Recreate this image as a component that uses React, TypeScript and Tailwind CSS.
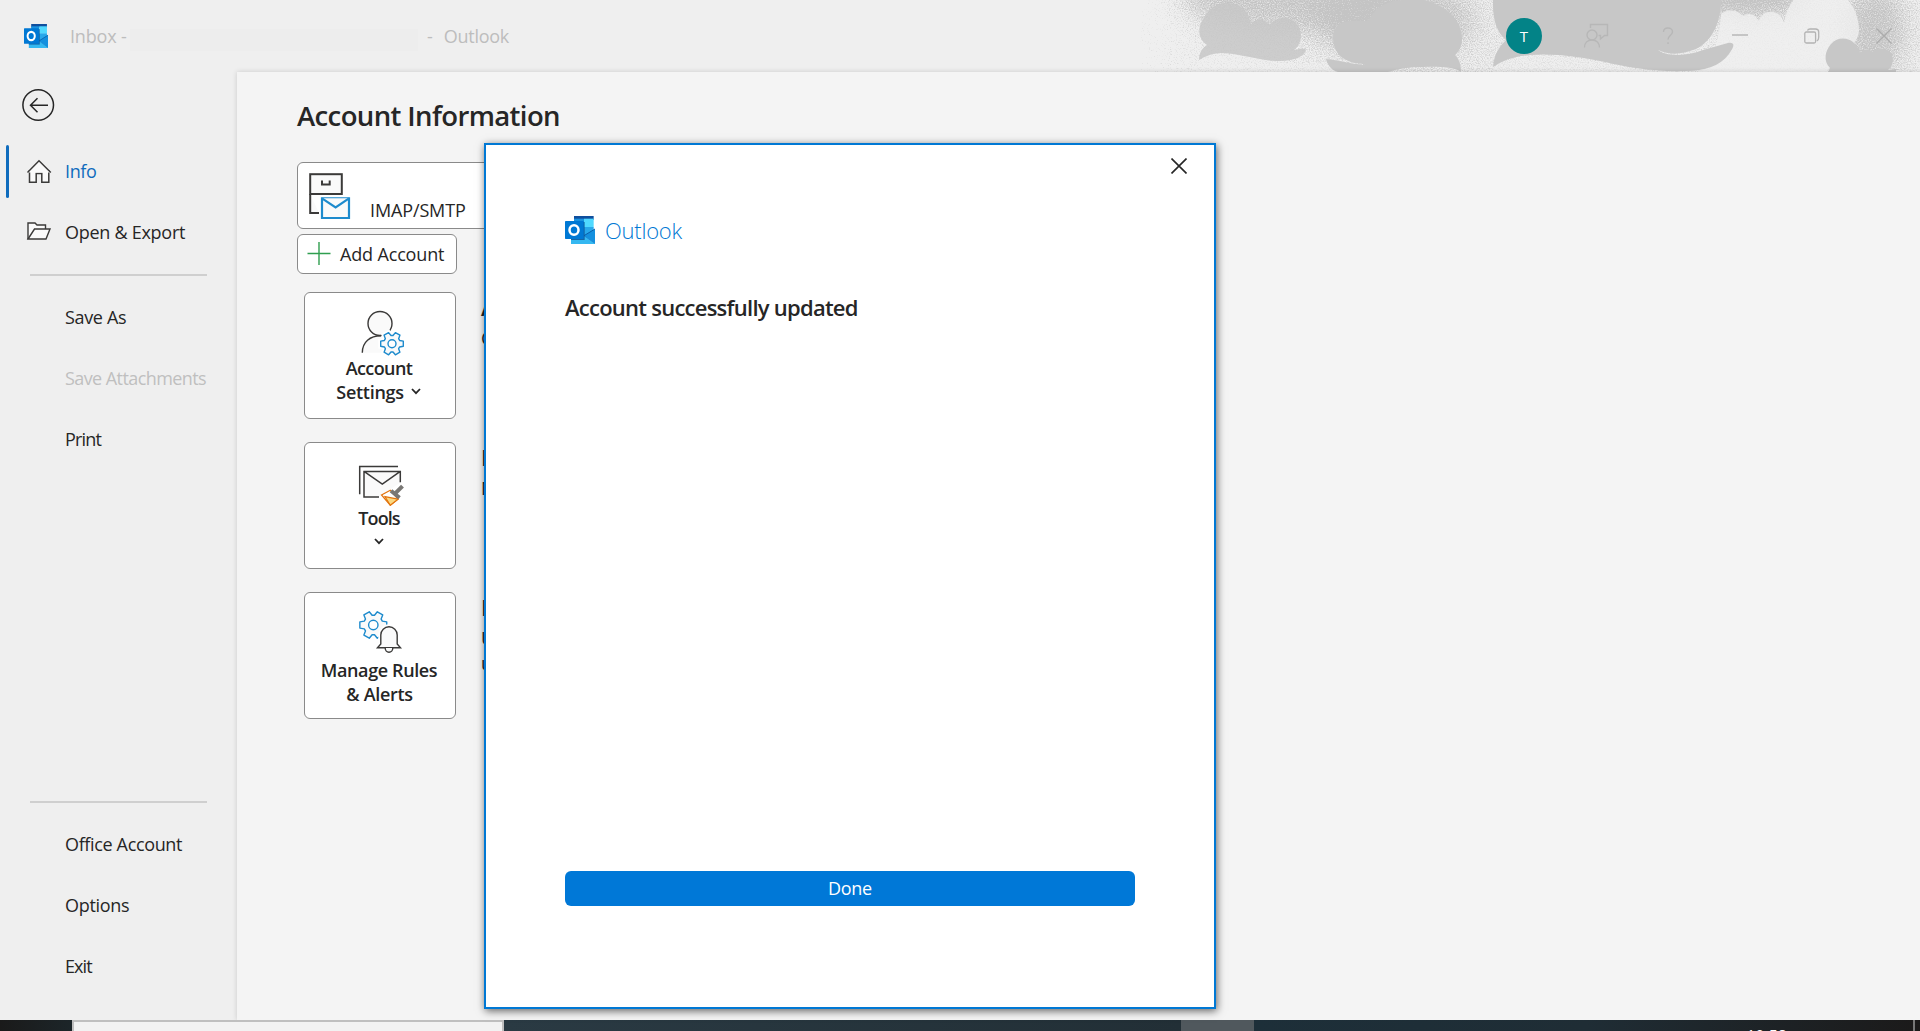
import type { ReactNode } from 'react'

function gearPath(cx: number, cy: number, outer: number, inner: number) {
  const points: string[] = []
  for (let i = 0; i < 6; i++) {
    const steps: [number, number][] = [[-23, inner], [-13, outer], [13, outer], [23, inner]]
    for (const [offset, r] of steps) {
      const a = ((i * 60 + offset) * Math.PI) / 180
      points.push(`${(cx + r * Math.cos(a)).toFixed(2)} ${(cy + r * Math.sin(a)).toFixed(2)}`)
    }
  }
  return `M${points.join('L')}Z`
}

function OutlookLogo({ className }: { className: string }) {
  return (
    <svg viewBox="0 0 90 84" preserveAspectRatio="none" className={className}>
      <rect x="27" y="0" width="59" height="12" fill="#0f4f9e" />
      <rect x="27" y="8" width="30" height="26" fill="#1a93e0" />
      <rect x="57" y="8" width="29" height="26" fill="#50d9ff" />
      <rect x="27" y="33" width="59" height="30" fill="#28a8ea" />
      <path d="M18 58H58L90 80V84H18Z" fill="#35b8f1" />
      <path d="M57 59L90 39V82Z" fill="#1490df" />
      <path d="M57 59L90 39" stroke="#0a5ea8" strokeWidth="3" />
      <path d="M57 59L90 82" stroke="#1a7fcb" strokeWidth="2" />
      <rect x="18" y="18" width="41" height="54" fill="#0a4b8c" opacity="0.75" />
      <rect x="0" y="15" width="56" height="54" rx="2" fill="#0078d4" />
      <ellipse cx="27" cy="42" rx="13.5" ry="14.5" fill="none" stroke="#fff" strokeWidth="7.5" />
    </svg>
  )
}

function TitleArt() {
  return (
    <svg width="780" height="72" viewBox="0 0 780 72" className="absolute right-0 top-0">
      <defs>
        <filter id="stipple" x="0" y="0" width="100%" height="100%" colorInterpolationFilters="sRGB">
          <feTurbulence type="fractalNoise" baseFrequency="0.85" numOctaves="2" seed="7" result="noise" />
          <feColorMatrix in="noise" type="matrix" values="0 0 0 0 0  0 0 0 0 0  0 0 0 0 0  1 0 0 0 0" result="grain" />
          <feComposite in="SourceGraphic" in2="grain" operator="arithmetic" k1="0" k2="1" k3="1" k4="-0.5" result="sum" />
          <feColorMatrix in="sum" type="matrix" values="0 0 0 0 0.77  0 0 0 0 0.77  0 0 0 0 0.77  0 0 0 1.9 -0.3" />
        </filter>
        <filter id="soft" x="-50%" y="-50%" width="200%" height="200%">
          <feGaussianBlur stdDeviation="14" />
        </filter>
        <linearGradient id="fade" x1="0" x2="1" y1="0" y2="0">
          <stop offset="0" stopOpacity="0" />
          <stop offset="0.08" stopOpacity="0.15" />
          <stop offset="0.3" stopOpacity="0.26" />
          <stop offset="1" stopOpacity="0.2" />
        </linearGradient>
      </defs>
      <g filter="url(#stipple)">
        <rect width="780" height="72" fill="url(#fade)" />
        <g filter="url(#soft)">
          <ellipse cx="150" cy="-4" rx="115" ry="36" fillOpacity="0.5" />
          <ellipse cx="255" cy="20" rx="80" ry="38" fillOpacity="0.5" />
          <ellipse cx="610" cy="-6" rx="60" ry="22" fillOpacity="0.7" />
          <ellipse cx="734" cy="30" rx="32" ry="46" fillOpacity="0.55" />
        </g>
      </g>
      {/* pale cloud behind the window buttons */}
      <g fill="#efefef" fillOpacity="0.82">
        <path d="M581 14C588 8 598 10 603 16C609 12 615 14 619 21C622 9 640 8 644 23C648 -2 665 -14 681 -14C702 -14 719 8 719 30C719 38 714 44 708 50L686 72H560C572 60 580 40 581 14Z" />
        <path d="M59 61C75 51 95 55 115 58C150 66 200 62 186 63L196 72H50Z" fillOpacity="0.4" />
        <path d="M353 67C380 52 410 52 465 63C490 68 505 70 520 72H353Z" fillOpacity="0.4" />
      </g>
      <g fill="#c7c7c7">
        <path
          opacity="0.85"
          d="M59 60C59 53 62 48 67 45C57 38 58 27 63 19C70 6 80 2 90 3C101 4 109 12 111 24C116 17 125 18 129 25C137 16 150 16 157 24C164 33 161 45 154 50C160 49 165 48 166 50C164 57 153 61 140 61C118 61 100 53 80 53C70 54 64 57 59 60Z"
        />
        <path d="M186 59C192 59 205 63 225 65C222 63 218 64 215 63C200 60 193 50 193 38C193 27 200 21 211 21H228C234 10 242 2 262 0H284C306 5 322 21 322 38C322 46 319 52 315 55C320 60 321 66 321 72C312 65 290 67 275 67C262 68 255 70 248 72H198C190 70 187 63 186 59Z" />
        <path d="M353 0H581C581 20 574 40 556 49C540 55 530 55 518 50C525 56 545 57 563 50L588 43C596 42 594 47 589 54C580 66 565 71 545 71C515 72 485 67 465 62C440 57 415 53 390 55C375 56 362 61 353 67C354 52 362 44 366 40C356 32 353 18 353 5Z" />
        <path d="M688 72L690 68C683 61 685 51 691 44C700 34 716 38 720 53C724 48 729 49 732 52C738 47 748 48 751 53C755 60 752 67 748 70L756 69V72Z" />
      </g>
    </svg>
  )
}

function TitleBar() {
  return (
    <header className="relative flex h-[72px] shrink-0 items-center bg-[#efefef] text-[18px] text-[#bdbdbd]">
      <TitleArt />
      <OutlookLogo className="ml-6 h-6 w-6" />
      <span className="ml-[22px] w-[60px] whitespace-nowrap tracking-[-0.17px]">Inbox -</span>
      <span className="mt-2 h-[22px] w-[288px] bg-[#ededed]" />
      <span className="ml-[9px]">-</span>
      <span className="ml-[11px] tracking-[-0.28px]">Outlook</span>
      <div className="relative ml-auto mr-[28px] flex items-center">
        <span className="flex h-9 w-9 items-center justify-center rounded-full bg-[#038387] text-[15px] text-white">T</span>
        <svg width="26" height="26" viewBox="0 0 26 26" fill="none" stroke="#b7b7b7" strokeWidth="1.4" className="ml-[41px]">
          <circle cx="9" cy="12" r="5" />
          <path d="M1.5 24.5C1.5 20 4.5 17 9 17S16.5 20 16.5 24.5M7.5 5V1.5H24.5V12.5H21.5L17.5 16V12.5H15.5" />
        </svg>
        <svg width="12" height="18" viewBox="0 0 12 18" fill="none" stroke="#b7b7b7" strokeWidth="1.4" className="ml-[53px]">
          <path d="M1.5 5C1.5 2.5 3.5 1 6 1S10.5 2.5 10.5 5C10.5 8 6 8.5 6 12.5M6 15.2V17" />
        </svg>
        <svg width="16" height="16" viewBox="0 0 16 16" stroke="#b3b3b3" strokeWidth="1.4" className="ml-[58px]">
          <path d="M0 7H16" />
        </svg>
        <svg width="16" height="16" viewBox="0 0 16 16" fill="none" stroke="#b3b3b3" strokeWidth="1.3" className="ml-[56px]">
          <rect x="0.8" y="4" width="10.8" height="11" rx="1.5" />
          <path d="M3.5 2.5C4 1.3 5 1 6 1H11.5C13.5 1 14.7 2.2 14.7 4V9.5C14.7 11.5 14 12.5 12.8 13" />
        </svg>
        <svg width="16" height="16" viewBox="0 0 16 16" stroke="#acacac" strokeWidth="1.3" className="ml-[56px]">
          <path d="M0.5 0.5L15.5 15.5M15.5 0.5L0.5 15.5" />
        </svg>
      </div>
    </header>
  )
}

function NavItem({ children, icon, className = '' }: { children: ReactNode; icon?: ReactNode; className?: string }) {
  return (
    <div className={`flex h-[61px] shrink-0 items-center whitespace-nowrap ${className}`}>
      <span className="flex w-[65px] pl-[26px]">{icon}</span>
      {children}
    </div>
  )
}

function Sidebar() {
  return (
    <nav className="flex w-[237px] shrink-0 flex-col bg-[#efefef] text-[18px] text-[#262626]">
      <svg width="34" height="34" viewBox="0 0 34 34" fill="none" stroke="#262626" strokeWidth="1.5" className="ml-[21px] mt-4 shrink-0">
        <circle cx="17.2" cy="17" r="15.3" />
        <path d="M27 17.3H9.8M16.5 10.3L9.5 17.3L16.5 24.3" />
      </svg>
      <div className="mt-[19px] flex items-center">
        <span className="ml-[6px] h-[53px] w-[3px] rounded-full bg-[#0f6cbd]" />
        <NavItem
          className="-ml-[9px] tracking-[-0.37px] text-[#0f6cbd]"
          icon={
            <svg width="26" height="26" viewBox="0 0 26 26" fill="#fafafa" stroke="#3b3a39" strokeWidth="1.5">
              <path d="M3.5 11V23.3H10.2V14.5H15.8V23.3H22.8V11" />
              <path d="M1.5 13.5L13 1.8L24.8 13.5" />
            </svg>
          }
        >
          Info
        </NavItem>
      </div>
      <NavItem
        className="tracking-[-0.27px]"
        icon={
          <svg width="26" height="20" viewBox="0 0 26 20" fill="#fafafa" stroke="#3b3a39" strokeWidth="1.4" className="-mt-[4px]">
            <path d="M2 18V2H9L11 4H19.5V8" />
            <path d="M2 18L8.5 8H24L20 18Z" />
          </svg>
        }
      >
        Open &amp; Export
      </NavItem>
      <hr className="ml-[30px] mt-[11px] w-[177px] border-t-2 border-[#cfcfcf]" />
      <NavItem className="mt-[11px] tracking-[-0.34px]">Save As</NavItem>
      <NavItem className="tracking-[-0.58px] text-[#bfbfbf]">Save Attachments</NavItem>
      <NavItem className="tracking-[-0.8px]">Print</NavItem>
      <div className="mt-auto flex flex-col pb-[23px]">
        <hr className="mb-[11px] ml-[30px] w-[177px] border-t-2 border-[#cfcfcf]" />
        <NavItem className="tracking-[-0.35px]">Office Account</NavItem>
        <NavItem className="tracking-[-0.31px]">Options</NavItem>
        <NavItem className="tracking-[-0.9px]">Exit</NavItem>
      </div>
    </nav>
  )
}

function Chevron({ className = '' }: { className?: string }) {
  return (
    <svg width="10" height="7" viewBox="0 0 10 7" fill="none" stroke="#262626" strokeWidth="1.8" className={className}>
      <path d="M1 1L5 5.2L9 1" />
    </svg>
  )
}

function Card({ icon, children }: { icon: ReactNode; children: ReactNode }) {
  return (
    <div className="flex h-[127px] w-[152px] shrink-0 flex-col items-center rounded-md border border-[#8a8a8a] bg-white pt-[17px] text-[18px] font-semibold leading-6 text-[#262626]">
      {icon}
      {children}
    </div>
  )
}

function AccountIcon() {
  return (
    <svg width="48" height="46" viewBox="0 0 48 46" fill="#fafafa" strokeWidth="1.4" className="shrink-0">
      <path d="M6.3 42.7C6.3 32 14 25.7 26.7 25.7L27 42.7" stroke="none" />
      <circle cx="24" cy="13.5" r="12" stroke="#3b3a39" />
      <path d="M6.3 42.7C6.3 32 14 25.7 25 25.7" fill="none" stroke="#3b3a39" />
      <path d={gearPath(36, 33.7, 11.6, 8.3)} fill="#fff" stroke="#fff" strokeWidth="5" />
      <path d={gearPath(36, 33.7, 11.6, 8.3)} stroke="#1e8bcd" strokeLinejoin="round" />
      <circle cx="36" cy="33.7" r="4" fill="#fff" stroke="#1e8bcd" />
    </svg>
  )
}

function ToolsIcon() {
  return (
    <svg width="48" height="46" viewBox="0 -0.7 48 46" fill="none" stroke="#3b3a39" strokeWidth="1.5" className="shrink-0">
      <path d="M3.7 33.5V5.7H42" />
      <path d="M44.3 22V10.7H8V36H23L44 22" fill="#fafafa" stroke="none" />
      <path d="M44.3 21.5V10.7H8V36.2H23M8 10.7L26.3 23.3L44.3 10.7" />
      <path d="M25.5 34.3L34.3 29.5L42 38.5L34.3 44.5Z" fill="#fff" stroke="#e3730b" strokeWidth="1.3" />
      <path d="M29 36L42 38.5L34.3 44.5Z" fill="#fbd982" stroke="#e3730b" strokeWidth="1.2" />
      <path d="M35 30L43.5 37M39.5 32.5L46.5 25.5" stroke="#797774" strokeWidth="4" />
    </svg>
  )
}

function RulesIcon() {
  return (
    <svg width="48" height="46" viewBox="0 0 48 46" fill="#fafafa" strokeWidth="1.4" className="shrink-0">
      <path d={gearPath(17.3, 15, 13.8, 9.8)} stroke="#1e8bcd" strokeLinejoin="round" />
      <circle cx="17.3" cy="15" r="4.7" fill="#fff" stroke="#1e8bcd" />
      <path d="M21.5 37.7L24.8 34V25A8.2 8.2 0 0 1 41.2 25V34L44.5 37.7Z" stroke="#fff" strokeWidth="5" />
      <path d="M21.5 37.7L24.8 34V25A8.2 8.2 0 0 1 41.2 25V34L44.5 37.7Z" stroke="#3b3a39" />
      <path d="M29.2 38A3.8 4.2 0 0 0 36.8 38" stroke="#3b3a39" />
    </svg>
  )
}

function AccountInfo() {
  return (
    <main className="relative z-10 flex-1 bg-[#f4f4f4] pl-[60px] text-[18px] text-[#262626] shadow-[0_0_5px_rgba(0,0,0,0.16)]">
      <h1 className="pt-[24px] text-[27.5px] font-semibold leading-10 tracking-[-0.62px]">Account Information</h1>
      <div className="mt-[26px] flex h-[67px] w-[520px] rounded-md border border-[#8a8a8a] bg-white">
        <svg width="44" height="50" viewBox="0 0 44 50" fill="#fafafa" stroke="#3b3a39" strokeWidth="2" className="ml-[10px] mt-[9px]">
          <path d="M2.2 22V41H11" />
          <rect x="2.2" y="2.2" width="31.6" height="19.8" />
          <path d="M14 8.5V12.5H21.7V8.5" />
          <path d="M14 26.3H41V46H14Z" stroke="#1e8bcd" strokeWidth="2.2" />
          <path d="M14 26.3L27.6 35.5L41 26.3" stroke="#1e8bcd" strokeWidth="2.2" />
        </svg>
        <span className="ml-[18px] mt-[35px] leading-6 tracking-[-0.13px]">IMAP/SMTP</span>
      </div>
      <div className="mt-[5px] flex h-10 w-[160px] items-center rounded-md border border-[#8a8a8a] bg-white">
        <svg width="24" height="24" viewBox="0 0 24 24" stroke="#2f9e4f" strokeWidth="1.4" className="ml-[9px]">
          <path d="M0.5 11.5H23.5M12 0V23" />
        </svg>
        <span className="ml-[9px] whitespace-nowrap tracking-[-0.16px]">Add Account</span>
      </div>
      <div className="ml-[7px] mt-[18px] flex gap-[25px]">
        <div className="flex flex-col gap-[23px]">
          <Card icon={<AccountIcon />}>
            <span className="-ml-[2px] tracking-[-0.61px]">Account</span>
            <span className="-ml-[3px] flex items-center tracking-[-0.28px]">
              Settings
              <Chevron className="-mt-[2px] ml-[7px]" />
            </span>
          </Card>
          <Card icon={<ToolsIcon />}>
            <span className="-ml-[2px] tracking-[-0.9px]">Tools</span>
            <Chevron className="-ml-[2px] mt-[8px]" />
          </Card>
          <Card icon={<RulesIcon />}>
            <span className="-ml-[2px] mt-[2px] whitespace-nowrap tracking-[-0.39px]">Manage Rules</span>
            <span className="-ml-px tracking-[-0.31px]">&amp; Alerts</span>
          </Card>
        </div>
        {/* section descriptions, mostly covered by the dialog */}
        <div className="flex flex-col whitespace-nowrap">
          <section className="h-[150px]">
            <h2 className="text-[22px] font-semibold leading-[30px]">Account</h2>
            <p className="pt-px leading-[30px]">Change</p>
          </section>
          <section className="h-[150px]">
            <h2 className="text-[22px] font-semibold leading-[30px]">Mailbox</h2>
            <p className="pt-px leading-[30px]">Manage</p>
          </section>
          <section>
            <h2 className="text-[22px] font-semibold leading-[30px]">Rules</h2>
            <p className="pt-px leading-[30px]">Use</p>
            <p className="-mt-[2px] leading-6">updates</p>
          </section>
        </div>
      </div>
    </main>
  )
}

function Dialog() {
  return (
    <div className="absolute left-[484px] top-[143px] z-20 flex h-[866px] w-[732px] flex-col border-2 border-[#0078d4] bg-white px-[79px] pb-[101px] shadow-[1px_2px_8px_rgba(0,0,0,0.6)]">
      <button className="-mr-[52px] mt-[13px] self-end">
        <svg width="16" height="16" viewBox="0 0 16 16" stroke="#262626" strokeWidth="1.6">
          <path d="M0.5 0.5L15.5 15.5M15.5 0.5L0.5 15.5" />
        </svg>
      </button>
      <div className="mt-[42px] flex h-7 items-center">
        <OutlookLogo className="h-7 w-[30px]" />
        <span className="ml-[10px] text-[22px] font-[350] tracking-[-0.25px] text-[#0078d4]">Outlook</span>
      </div>
      <h2 className="mt-[48px] text-[22px] font-semibold leading-[30px] tracking-[-0.75px] text-[#262626]">Account successfully updated</h2>
      <button className="mt-auto h-[35px] rounded-[6px] bg-[#0078d7] text-[18px] tracking-[-0.31px] text-white">Done</button>
    </div>
  )
}

function Taskbar() {
  return (
    <footer className="relative z-10 flex h-[11px] shrink-0 overflow-hidden bg-[#1c1c1c]">
      <div className="w-[72px] bg-linear-to-r from-[#1a1a1a] to-[#1c2529]" />
      <div className="w-[432px] border-2 border-b-0 border-[#bfbfbf] bg-[#f2f2f2]" />
      <div className="w-[677px] bg-linear-to-r from-[#2a3a43] to-[#222f36]" />
      <div className="w-[73px] bg-[#50585d]" />
      <div className="flex flex-1 justify-end bg-linear-to-r from-[#1d2f39] via-[#1f2d35] to-[#1b1a1a]">
        <span className="mr-[126px] mt-[5px] text-[16px] leading-[22px] text-white">10:58</span>
        <span className="mr-[5px] w-[2px] bg-[#777]" />
      </div>
    </footer>
  )
}

export default function App() {
  return (
    <div className="relative flex h-[1031px] w-[1920px] flex-col overflow-hidden bg-[#efefef] font-['Open_Sans','Noto_Sans',sans-serif]">
      <TitleBar />
      <div className="flex h-[948px] shrink-0">
        <Sidebar />
        <AccountInfo />
      </div>
      <Taskbar />
      <Dialog />
    </div>
  )
}
